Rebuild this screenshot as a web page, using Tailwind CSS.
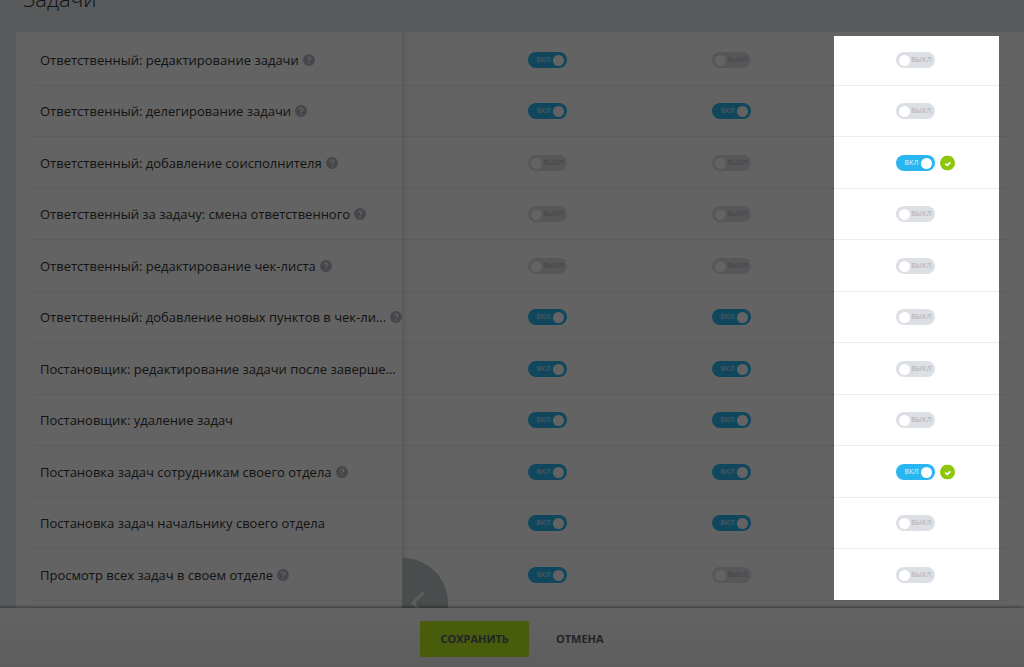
<!doctype html>
<html lang="ru">
<head>
  <meta charset="utf-8">
  <meta name="viewport" content="width=device-width, initial-scale=1">
  <title>Права доступа – Задачи</title>
  <script src="https://cdn.jsdelivr.net/npm/@tailwindcss/browser@4"></script>
</head>

<body class="relative h-screen flex flex-col overflow-hidden bg-[#e3e8ee] font-['Open_Sans','Noto_Sans',sans-serif] text-[#333]">
  <main class="flex-1 min-h-0 overflow-hidden">
    <h1 class="-mt-[18px] mb-[18px] pl-[23px] text-[22px] leading-8 font-light">Задачи</h1>

    <section class="relative ml-4 pt-[3px] pl-[18px] pr-[17px] pb-10 bg-white">
      <table class="w-full h-[566px] table-fixed border-collapse">
        <colgroup>
          <col>
          <col class="w-[184px]">
          <col class="w-[184px]">
          <col class="w-[184px]">
        </colgroup>
        <tbody id="rights"></tbody>
      </table>

      <!-- edge of the fixed column -->
      <div class="absolute top-0 bottom-0 left-[386px] w-[6px] bg-linear-to-r from-black/10 to-transparent"></div>

      <!-- scroll-left handle -->
      <button type="button" aria-label="Прокрутить влево" class="absolute top-[526px] left-[386px] w-[46px] h-[90px] rounded-r-full bg-[#bfc6c6]">
        <svg class="absolute left-[8px] top-[32px] w-4 h-6" viewBox="0 0 16 24" fill="none" stroke="#eef0f0" stroke-width="3"><path d="M14 2 3 13l11 11"/></svg>
      </button>
    </section>
  </main>

  <footer class="relative h-[59px] shrink-0 pt-[3px] flex justify-center items-center gap-[27px] bg-linear-to-b from-white to-[#f0f0f0] shadow-[0_-1px_3px_rgba(0,0,0,0.45)] text-[11px] leading-4 font-bold">
    <button type="button" class="h-9 px-5 rounded-[2px] bg-[#bbed21] text-[#535c69]">СОХРАНИТЬ</button>
    <a href="#" class="text-[#535c69]">ОТМЕНА</a>
  </footer>

  <!-- spotlight: everything outside the box is dimmed -->
  <div class="absolute top-9 right-[25px] z-10 w-[165px] h-[564px] pointer-events-none shadow-[0_0_0_2000px_rgba(0,0,0,0.61)]"></div>

<script>
/* title, has hint, [col1, col2, col3], just changed */
const rights = [
  ['Ответственный: редактирование задачи', 1, [1, 0, 0]],
  ['Ответственный: делегирование задачи', 1, [1, 1, 0]],
  ['Ответственный: добавление соисполнителя', 1, [0, 0, 1], 1],
  ['Ответственный за задачу: смена ответственного', 1, [0, 0, 0]],
  ['Ответственный: редактирование чек-листа', 1, [0, 0, 0]],
  ['Ответственный: добавление новых пунктов в чек-ли...', 1, [1, 1, 0]],
  ['Постановщик: редактирование задачи после заверше...', 0, [1, 1, 0]],
  ['Постановщик: удаление задач', 0, [1, 1, 0]],
  ['Постановка задач сотрудникам своего отдела', 1, [1, 1, 1], 1],
  ['Постановка задач начальнику своего отдела', 0, [1, 1, 0]],
  ['Просмотр всех задач в своем отделе', 1, [1, 0, 0]],
];

const hint = `
  <svg class="w-3 h-3 shrink-0" viewBox="0 0 12 12">
    <circle cx="6" cy="6" r="6" fill="#b5b8c2"/>
    <path d="M4.3 4.7c0-2.3 3.5-2.2 3.5-.2C7.8 5.8 6 5.8 6 7.3" fill="none" stroke="#fff" stroke-width="1.2"/>
    <circle cx="6" cy="9" r=".8" fill="#fff"/>
  </svg>`;

const done = `
  <svg class="absolute left-full top-1/2 -translate-y-1/2 ml-[5px] w-[15px] h-[15px]" viewBox="0 0 15 15">
    <circle cx="7.5" cy="7.5" r="7.5" fill="#8fc50b"/>
    <path d="M5.2 8.1 7.2 9.8l3.2-2.9" fill="none" stroke="#fff" stroke-width="1.7"/>
  </svg>`;

function toggle(on, title, changed) {
  return `
    <label class="relative block mx-auto w-[39px] h-4 text-[7px] leading-4 font-semibold">
      <input type="checkbox" aria-label="${title}" class="peer absolute inset-0 w-full h-full appearance-none rounded-full bg-[#dcdfe4] checked:bg-[#29b6f0]" ${on ? 'checked' : ''}>
      <span class="absolute right-[3px] top-0 text-[#b4b9c1] peer-checked:hidden">ВЫКЛ</span>
      <span class="absolute left-[9px] top-0 hidden text-[#b5e6fb] peer-checked:block">ВКЛ</span>
      <span class="absolute left-[3px] top-[3px] w-[11px] h-[11px] rounded-full bg-white peer-checked:left-[25px]"></span>
      ${changed ? done : ''}
    </label>`;
}

document.getElementById('rights').innerHTML = rights.map(([title, help, cols, changed]) => `
  <tr class="border-b border-[#edeef0]">
    <th scope="row" class="p-0 pl-[6px] text-left font-normal text-[13px] leading-5">
      <div class="flex items-center gap-1 whitespace-nowrap"><span>${title}</span>${help ? hint : ''}</div>
    </th>
    ${cols.map((on, i) => `<td class="p-0">${toggle(on, title, changed && i === 2)}</td>`).join('')}
  </tr>`).join('');
</script>
</body>
</html>
